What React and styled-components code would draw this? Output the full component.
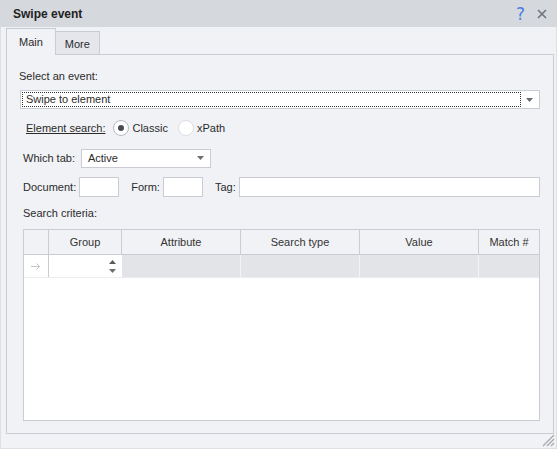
import React, { useState } from 'react';
import styled, { createGlobalStyle } from 'styled-components';

const palette = {
  title: '#d5d8dd',
  body: '#f1f2f6',
  border: '#c9ccd3',
  light: '#dcdfe4',
  text: '#2b2b2b',
  row: '#e3e4e8',
  white: '#ffffff',
};

const COLUMNS = [
  { key: 'ind', title: '', width: 25 },
  { key: 'group', title: 'Group', width: 73 },
  { key: 'attr', title: 'Attribute', width: 119 },
  { key: 'type', title: 'Search type', width: 119 },
  { key: 'value', title: 'Value', width: 119 },
  { key: 'match', title: 'Match #', width: 'auto' },
];

const GlobalStyle = createGlobalStyle`
  html, body {
    margin: 0;
    padding: 0;
    background: #ffffff;
  }
  * {
    box-sizing: border-box;
  }
`;

const Caret = () => (
  <svg width="7" height="4" viewBox="0 0 7 4">
    <path d="M0 0h7L3.5 4z" fill="#6b6e75" />
  </svg>
);

const App = () => {
  const [tab, setTab] = useState(0);
  const [mode, setMode] = useState('classic');

  return (
    <Window>
      <GlobalStyle />
      <TitleBar>
        <Title>Swipe event</Title>
        <TitleButtons>
          <Help>?</Help>
          <svg width="10" height="10" viewBox="0 0 10 10">
            <path d="M1 1l8 8M9 1l-8 8" stroke="#6f737b" strokeWidth="1.6" />
          </svg>
        </TitleButtons>
      </TitleBar>

      <Body>
        <TabsWrapper>
          {['Main', 'More'].map((item, i) => (
            <Tab key={item} isActive={tab === i} onClick={() => setTab(i)}>
              {item}
            </Tab>
          ))}
        </TabsWrapper>

        <Panel>
          <Label indent={0} top={14}>Select an event:</Label>
          <Combo top={7} indent={1}>
            <FocusText>Swipe to element</FocusText>
            <ComboArrow>
              <Caret />
            </ComboArrow>
          </Combo>

          <Row top={9} indent={7}>
            <Underlined>Element search:</Underlined>
            <Radio onClick={() => setMode('classic')}>
              <RadioCircle checked={mode === 'classic'} />
              Classic
            </Radio>
            <Radio onClick={() => setMode('xpath')}>
              <RadioCircle checked={mode === 'xpath'} />
              xPath
            </Radio>
          </Row>

          <Row top={10} indent={4}>
            <InlineLabel space={6}>Which tab:</InlineLabel>
            <Combo width={130}>
              <ComboText>Active</ComboText>
              <ComboArrow>
                <Caret />
              </ComboArrow>
            </Combo>
          </Row>

          <Row top={9} indent={4}>
            <InlineLabel>Document:</InlineLabel>
            <Input width={40} />
            <InlineLabel gap={12}>Form:</InlineLabel>
            <Input width={40} />
            <InlineLabel gap={12}>Tag:</InlineLabel>
            <Input grow />
          </Row>

          <Label indent={4} top={9}>Search criteria:</Label>

          <Grid>
            <HeaderRow>
              {COLUMNS.map(col => (
                <HeaderCell key={col.key} w={col.width}>
                  {col.title}
                </HeaderCell>
              ))}
            </HeaderRow>
            <DataRow>
              {COLUMNS.map(col => {
                if (col.key === 'ind') {
                  return (
                    <Cell key={col.key} w={col.width} indicator>
                      <svg width="10" height="8" viewBox="0 0 10 8">
                        <path d="M0 4.5h8.5M5.5 1.5l3 3-3 3" stroke="#c3c5ca" fill="none" strokeWidth="1" />
                      </svg>
                    </Cell>
                  );
                }
                if (col.key === 'group') {
                  return (
                    <EditorCell key={col.key} w={col.width}>
                      <Spin>
                        <svg width="7" height="4" viewBox="0 0 7 4">
                          <path d="M0 4h7L3.5 0z" fill="#55585e" />
                        </svg>
                        <Caret />
                      </Spin>
                    </EditorCell>
                  );
                }
                return <Cell key={col.key} w={col.width} />;
              })}
            </DataRow>
          </Grid>
        </Panel>

        <Grip>
          <svg width="14" height="14" viewBox="0 0 14 14">
            <path d="M13 2L2 13M13 6L6 13M13 10L10 13" stroke="#a6a9b0" strokeWidth="1.3" />
          </svg>
        </Grip>
      </Body>
    </Window>
  );
};

const Window = styled.div`
  width: 557px;
  height: 449px;
  display: flex;
  flex-direction: column;
  background: ${palette.body};
  border: 1px solid ${palette.light};
  border-top: none;
  font-family: 'Liberation Sans', Arial, sans-serif;
  font-size: 11px;
  color: ${palette.text};
`;

const TitleBar = styled.div`
  height: 27px;
  margin: 0 -1px;
  background: ${palette.title};
  display: flex;
  align-items: center;
  justify-content: space-between;
  padding: 1px 10px 0 13px;
`;

const Title = styled.div`
  font-weight: bold;
  font-size: 12px;
  color: #222;
`;

const TitleButtons = styled.div`
  display: flex;
  align-items: center;
  gap: 12px;
`;

const Help = styled.span`
  color: #4b7fe0;
  font-size: 17px;
  font-family: 'DejaVu Sans', sans-serif;
  line-height: 1;
`;

const Body = styled.div`
  position: relative;
  flex: 1;
  display: flex;
  flex-direction: column;
  padding: 2px 2px 0 5px;
`;

const TabsWrapper = styled.div`
  display: flex;
  align-items: flex-end;
  height: 26px;
  position: relative;
  z-index: 1;
  margin-bottom: -1px;
`;

const Tab = styled.div`
  height: ${props => (props.isActive ? 27 : 24)}px;
  padding: 0 ${props => (props.isActive ? 12 : 9)}px;
  display: flex;
  align-items: center;
  padding-top: ${props => (props.isActive ? 0 : 1)}px;
  background: ${props => (props.isActive ? palette.body : '#e4e6eb')};
  border: 1px solid ${palette.border};
  border-bottom: ${props => (props.isActive ? 'none' : `1px solid ${palette.border}`)};
  border-left: ${props => (props.isActive ? `1px solid ${palette.border}` : 'none')};
  color: ${palette.text};
  cursor: pointer;
`;

const Panel = styled.div`
  height: 380px;
  border: 1px solid ${palette.border};
  padding: 0 13px 0 12px;
  display: flex;
  flex-direction: column;
`;

const Label = styled.div`
  margin-top: ${props => props.top}px;
  margin-left: ${props => props.indent}px;
  line-height: 14px;
`;

const Row = styled.div`
  display: flex;
  align-items: center;
  margin-top: ${props => props.top}px;
  margin-left: ${props => props.indent}px;
  min-height: 20px;
`;

const Combo = styled.div`
  height: 19px;
  margin-top: ${props => props.top || 0}px;
  margin-left: ${props => props.indent || 0}px;
  width: ${props => (props.width ? `${props.width}px` : 'auto')};
  background: ${palette.white};
  border: 1px solid ${palette.border};
  display: flex;
  align-items: center;
  padding: 1px;
`;

const FocusText = styled.div`
  flex: 1;
  height: 100%;
  border: 1px dotted #333;
  display: flex;
  align-items: center;
  padding-left: 3px;
  line-height: 1;
`;

const ComboText = styled.div`
  flex: 1;
  padding-left: 5px;
`;

const ComboArrow = styled.div`
  width: 17px;
  display: flex;
  justify-content: center;
  align-items: center;
`;

const Underlined = styled.span`
  text-decoration: underline;
  margin-right: 8px;
`;

const Radio = styled.label`
  display: flex;
  align-items: center;
  margin-right: 10px;
  cursor: pointer;
`;

const RadioCircle = styled.span`
  width: 16px;
  height: 16px;
  border-radius: 50%;
  background: ${palette.white};
  border: 1px solid ${props => (props.checked ? '#b7bac1' : '#dcdee3')};
  display: flex;
  align-items: center;
  justify-content: center;
  margin-right: 3px;

  &::after {
    content: '';
    width: 6px;
    height: 6px;
    border-radius: 50%;
    background: ${props => (props.checked ? '#4a4c52' : 'transparent')};
  }
`;

const InlineLabel = styled.span`
  margin-left: ${props => props.gap || 0}px;
  margin-right: ${props => props.space || 3}px;
`;

const Input = styled.div`
  height: 20px;
  width: ${props => (props.grow ? 'auto' : `${props.width}px`)};
  flex: ${props => (props.grow ? 1 : 'none')};
  background: ${palette.white};
  border: 1px solid ${palette.border};
`;

const Grid = styled.div`
  margin-top: 9px;
  margin-left: 4px;
  height: 192px;
  background: ${palette.white};
  border: 1px solid ${palette.border};
  display: flex;
  flex-direction: column;
`;

const HeaderRow = styled.div`
  display: flex;
  height: 25px;
  background: ${palette.body};
  border-bottom: 1px solid ${palette.border};
`;

const HeaderCell = styled.div`
  width: ${props => (props.w === 'auto' ? 'auto' : `${props.w}px`)};
  flex: ${props => (props.w === 'auto' ? 1 : 'none')};
  display: flex;
  align-items: center;
  justify-content: center;
  border-right: 1px solid ${palette.border};
  color: #333;

  &:last-child {
    border-right: none;
  }
`;

const DataRow = styled.div`
  display: flex;
  height: 23px;
  border-bottom: 1px solid #ecedf0;
`;

const Cell = styled.div`
  width: ${props => (props.w === 'auto' ? 'auto' : `${props.w}px`)};
  flex: ${props => (props.w === 'auto' ? 1 : 'none')};
  background: ${props => (props.indicator ? palette.white : palette.row)};
  border-right: 1px solid ${props => (props.indicator ? palette.border : '#f3f4f6')};
  display: flex;
  align-items: center;
  justify-content: center;

  &:last-child {
    border-right: none;
  }
`;

const EditorCell = styled.div`
  width: ${props => props.w}px;
  background: ${palette.white};
  display: flex;
  justify-content: flex-end;
  align-items: center;
  padding-right: 6px;
`;

const Spin = styled.div`
  display: flex;
  flex-direction: column;
  gap: 5px;
`;

const Grip = styled.div`
  position: absolute;
  right: 1px;
  bottom: 1px;
  width: 14px;
  height: 14px;
  display: flex;
`;

export default App;
